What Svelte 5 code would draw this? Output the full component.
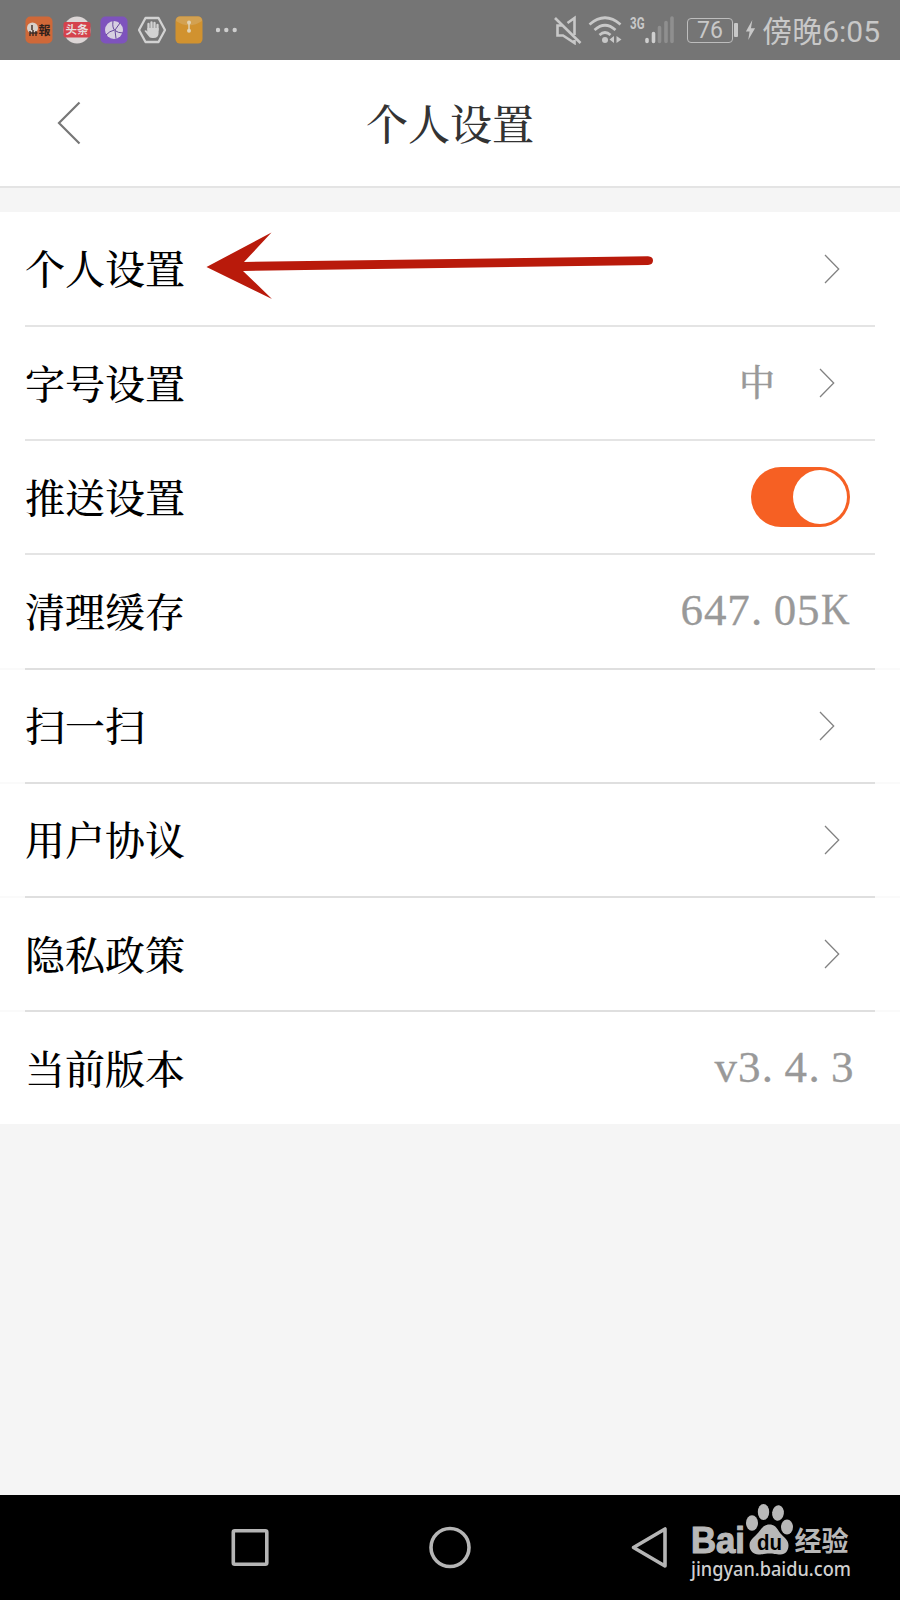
<script lang="ts">
  interface Row {
    label: string;
    value?: string;
    kind: 'link' | 'toggle' | 'text';
    inset?: boolean;
    fullLine?: boolean;
  }

  const rows: Row[] = [
    { label: '个人设置', kind: 'link' },
    { label: '字号设置', value: '中', kind: 'link', inset: true },
    { label: '推送设置', kind: 'toggle' },
    { label: '清理缓存', value: '647.05K', kind: 'text', fullLine: true },
    { label: '扫一扫', kind: 'link', inset: true, fullLine: true },
    { label: '用户协议', kind: 'link', fullLine: true },
    { label: '隐私政策', kind: 'link', fullLine: true },
    { label: '当前版本', value: 'v3.4.3', kind: 'text' },
  ];

  let pushOn = $state(true);
</script>

<div class="screen">
  <div class="status-bar">
    <div class="notifications">
      <svg class="app" viewBox="0 0 28 28">
        <rect x="0.5" y="0.5" width="27" height="27" rx="5" fill="#cf6838" />
        <circle cx="7.5" cy="12" r="5.5" fill="#d8cfc8" />
        <path d="M7 9v5M5 15v5M8 14v6M11 15v5M4.5 17h8" stroke="#3b2922" stroke-width="1.4" />
        <text x="13.5" y="19" font-size="12" font-weight="700" fill="#2e211c">報</text>
      </svg>
      <svg class="app" viewBox="0 0 28 28">
        <circle cx="14" cy="14" r="13.5" fill="#dcd6d6" />
        <rect x="0.5" y="6" width="27" height="15.5" rx="2" fill="#d5424c" />
        <text x="14" y="18" font-size="11.5" font-weight="700" text-anchor="middle" fill="#e6dddd">头条</text>
      </svg>
      <svg class="app" viewBox="0 0 28 28">
        <rect x="0.5" y="0.5" width="27" height="27" rx="5" fill="#7e53bd" />
        <circle cx="14" cy="14" r="9" fill="#d7d0e1" />
        <path d="M13 5q-1 7 2 9.5t8 2.5M14.5 14q-5 1-8.5 5M15 14.5l1 8M15 14l5-7" fill="none" stroke="#66489b" stroke-width="1" />
      </svg>
      <svg class="app" viewBox="0 0 28 28">
        <path d="M7.5 2h13L27 14l-6.5 12h-13L1 14z" fill="none" stroke="#d2d2d2" stroke-width="2.3" stroke-linejoin="round" />
        <path d="M10.5 14V8M13.5 13V6.5M16.5 13V7M19.5 14V9" stroke="#d2d2d2" stroke-width="2.3" stroke-linecap="round" />
        <path d="M9.4 12h11.2v5q0 5-5 5h-1.500q-2.5 0-4-2.5L6.5 15q1-1.5 2.900.5z" fill="#d2d2d2" />
      </svg>
      <svg class="app" viewBox="0 0 28 28">
        <rect x="0.5" y="0.5" width="27" height="27" rx="4.5" fill="#d1922f" />
        <path d="M1 5q0-4.5 4-4.5h18q4 0 4 4.5-6 4-13 4.500Q7 9 1 5z" fill="#d3a151" />
        <path d="M14 7v8" stroke="#e1d2b4" stroke-width="1.5" />
        <circle cx="14" cy="6.5" r="2" fill="#e1d2b4" />
        <circle cx="14" cy="14.8" r="2" fill="#e1d2b4" />
      </svg>
      <svg class="more" viewBox="0 0 24 28">
        <circle cx="2" cy="14" r="2.2" /><circle cx="10.3" cy="14" r="2.2" /><circle cx="18.7" cy="14" r="2.2" />
      </svg>
    </div>
    <div class="system">
      <svg class="mute" viewBox="0 0 28 30">
        <path d="M13.5 8L20.5 3v17M8 10.5H3.500v10H9l11.5 7.500v-3" fill="none" stroke="#c8c8c8" stroke-width="2.6" />
        <path d="M1 3l25.5 25" stroke="#c8c8c8" stroke-width="2.6" />
      </svg>
      <svg class="wifi" viewBox="0 0 34 30">
        <path d="M1.5 9.500Q17-4 32.5 9.500M6.5 15Q17 5.5 27.5 15M11.5 20Q17 15 22.5 20" fill="none" stroke="#c8c8c8" stroke-width="2.7" />
        <circle cx="17" cy="25" r="3" fill="#c8c8c8" />
        <path d="M26 21v7l-4.5-3.500zM28.5 21v7l5-3.500z" fill="#c8c8c8" />
      </svg>
      <svg class="signal" viewBox="0 0 46 30">
        <text class="net" x="0" y="13.5" textLength="14.5" lengthAdjust="spacingAndGlyphs">3G</text>
        <path d="M17 24.500v2M23.5 18.500v8" stroke="#cfcfcf" stroke-width="3.6" stroke-linecap="round" />
        <path d="M29.5 12.500v14M36 7.500v19M42 3v23.5" stroke="#8f8f8f" stroke-width="3.6" stroke-linecap="round" />
      </svg>
      <div class="battery"><span>76</span></div>
      <svg class="bolt" viewBox="0 0 12 24"><path d="M8 1L1 13.500h4L3.5 23 11 10H6.500z" fill="#c8c8c8" /></svg>
      <span class="clock">傍晚6:05</span>
    </div>
  </div>

  <header>
    <svg class="back" viewBox="0 0 26 48"><path d="M23.5 3.500L3 24 23.5 44.5" fill="none" stroke="#777" stroke-width="2.2" /></svg>
    <h1>个人设置</h1>
  </header>

  <main>
    {#each rows as row (row.label)}
      <div class="row" class:full-line={row.fullLine}>
        <span class="label">{row.label}</span>
        {#if row.kind === 'toggle'}
          <button class="toggle" class:on={pushOn} aria-label={row.label} onclick={() => (pushOn = !pushOn)}>
            <span class="knob"></span>
          </button>
        {:else}
          {#if row.value}
            <span class="value" class:version={row.value.startsWith('v')}>
              {#each row.value as ch}<span class="ch" class:hanzi={ch === '中'} class:dot={ch === '.'} class:unit={ch === 'K'}>{ch}</span>{/each}
            </span>
          {/if}
          {#if row.kind === 'link'}
            <svg class="chevron" class:inset={row.inset} viewBox="0 0 16 30">
              <path d="M1 1l13.7 14L1 29" fill="none" stroke="#828282" stroke-width="1.3" />
            </svg>
          {/if}
        {/if}
      </div>
    {/each}

    <!-- Pointer laid over the first row -->
    <svg class="pointer" viewBox="0 0 450 70">
      <path d="M0.5 35L65.5 0.500 38 30 442 24.200q5 .3 5 4.300t-5 4.500L37 39 66 67z" fill="#b91a0b" />
    </svg>
  </main>

  <nav>
    <svg viewBox="0 0 48 48"><rect x="7.3" y="6.8" width="33.5" height="33.5" rx="1.5" /></svg>
    <svg viewBox="0 0 48 48"><circle cx="24" cy="23.5" r="19" /></svg>
    <svg viewBox="0 0 48 48"><path d="M39 5v37L7.5 23.500z" /></svg>
    <div class="watermark">
      <svg class="logo" viewBox="0 0 164 54">
        <text class="brand" x="0" y="49.5" textLength="54" lengthAdjust="spacingAndGlyphs">Bai</text>
        <ellipse cx="61" cy="20" rx="6" ry="7.7" />
        <ellipse cx="72.5" cy="9" rx="5.7" ry="8" />
        <ellipse cx="87" cy="10" rx="5.9" ry="7.7" transform="rotate(8 87 10)" />
        <ellipse cx="96" cy="24" rx="6" ry="7.5" />
        <path d="M78.500 21.500c7 0 8 6 12 10s7 6 7 11-3 9-8 9-7-1-11-1-6 1-11 1-9-4-9-9 3-7 7-11 6-10 13-10z" />
        <text class="du" x="66" y="46.5" textLength="25" lengthAdjust="spacingAndGlyphs">du</text>
        <text class="jy" x="103.5" y="47.5" textLength="54" lengthAdjust="spacingAndGlyphs">经验</text>
      </svg>
      <svg class="url" viewBox="0 0 164 26">
        <text x="0" y="18.5" textLength="160" lengthAdjust="spacingAndGlyphs">jingyan.baidu.com</text>
      </svg>
    </div>
  </nav>
</div>

<style>
  :global(body) { background: #f5f5f5; }

  .screen {
    width: 900px; height: 1600px; display: flex; flex-direction: column;
    overflow: hidden; background: #f5f5f5;
    font-family: "Liberation Serif", "Noto Serif CJK SC", "Noto Sans CJK SC", serif;
  }

  /* Status bar */
  .status-bar {
    height: 60px; flex: none; box-sizing: border-box; padding: 0 20px 0 25px;
    display: flex; justify-content: space-between; align-items: center;
    background: #757575; color: #c8c8c8;
    font-family: Roboto, "Noto Sans CJK SC", sans-serif;
  }
  .notifications { display: flex; align-items: center; gap: 9.5px; }
  .app { width: 28px; height: 28px; }
  .more { width: 24px; height: 28px; margin-left: 3px; fill: #cecece; }
  .system { display: flex; align-items: center; }
  .mute { width: 28px; height: 30px; margin-right: 6px; }
  .wifi { width: 34px; height: 30px; margin-right: 8px; }
  .signal { width: 46px; height: 30px; margin-right: 11px; }
  .net { font-size: 16.5px; font-weight: 700; fill: #c8c8c8; }
  .battery {
    position: relative; width: 46px; height: 25px; box-sizing: border-box;
    border: 1.5px solid #bdbdbd; border-radius: 4px; margin-right: 12px;
    display: flex; align-items: center; justify-content: center; font-size: 23px; line-height: 1;
  }
  .battery::after {
    content: ''; position: absolute; right: -6px; top: 4px;
    width: 4px; height: 14px; border-radius: 1px; background: #c8c8c8;
  }
  .bolt { width: 11px; height: 24px; margin-right: 7px; }
  .clock {
    font-size: 30px; line-height: 56px; padding-top: 4px; white-space: nowrap;
    width: 117px; display: flex; justify-content: flex-end;
  }

  /* Title bar */
  header {
    height: 128px; flex: none; box-sizing: border-box; background: #fff;
    border-bottom: 2px solid #e4e4e4; margin-bottom: 24px;
    display: grid; grid-template-columns: 110px 1fr 110px; align-items: center;
  }
  .back { width: 26px; height: 48px; margin-left: 56px; }
  h1 {
    margin: 0; padding-top: 5px; text-align: center;
    font-size: 42px; font-weight: 500; line-height: 60px; color: #333;
  }

  /* Settings list */
  main { position: relative; background: #fff; padding: 0 25px; }
  .row {
    position: relative; height: 114.2px; box-sizing: border-box; padding-right: 25px;
    display: flex; align-items: center; border-bottom: 2px solid #e4e4e4;
  }
  .row:first-child { height: 115px; }
  .row:last-of-type { border-bottom: 0; height: 112.200px; }
  .row.full-line::after {
    content: ''; position: absolute; left: -25px; right: -25px; bottom: -2px;
    height: 2px; background: rgba(0, 0, 0, 0.02);
  }
  .label { flex: 1; padding-top: 5px; font-size: 40px; font-weight: 500; line-height: 60px; color: #000; }
  .value {
    display: flex; padding-bottom: 2px; font-size: 45px; line-height: 60px;
    color: #999; -webkit-text-stroke: 0.3px #999;
  }
  .value.version { margin-right: -4px; }
  .ch { width: 23.3px; text-align: center; }
  .ch.dot { text-align: left; padding-left: 1px; width: 22.3px; }
  .ch.unit { width: 30px; font-size: 44px; text-align: right; transform-origin: right; transform: translateX(-2px) scaleX(0.9); }
  .ch.hanzi { width: 36px; font-size: 36px; font-weight: 500; padding-top: 4px; }
  .chevron { width: 16px; height: 30px; margin-right: 10px; }
  .chevron.inset { margin-right: 15px; }
  .value + .chevron { margin-left: 44px; }

  .toggle {
    width: 99px; height: 60px; border: 0; border-radius: 30px; padding: 3px;
    display: flex; background: #ccc;
  }
  .toggle.on { background: #f66023; justify-content: flex-end; }
  .knob { width: 54px; height: 54px; border-radius: 50%; background: #fff; }

  .pointer { position: absolute; left: 206px; top: 20px; width: 450px; height: 70px; }

  /* Navigation keys */
  nav {
    height: 105px; flex: none; margin-top: auto; box-sizing: border-box; background: #000;
    padding: 8px 0 0 226px; display: flex; align-items: flex-start;
  }
  nav > svg {
    width: 48px; height: 48px; margin: 21px 152px 0 0;
    fill: none; stroke: #b5b5b5; stroke-width: 3.6; stroke-linejoin: round;
  }
  nav > svg:nth-child(3) { margin-right: 17px; }
  .watermark { display: flex; flex-direction: column; fill: #b8b8b8; }
  .logo { width: 164px; height: 54px; overflow: visible; }
  .brand { font: 700 36px "Liberation Sans", sans-serif; stroke: #b8b8b8; stroke-width: 1.2px; }
  .du { font: 700 22px "Liberation Sans", sans-serif; fill: #000; }
  .jy { font: 700 27px "Noto Sans CJK SC", sans-serif; }
  .url { width: 164px; height: 26px; font: 500 20px "Noto Sans", sans-serif; fill: #d0d0d0; overflow: visible; }
</style>
